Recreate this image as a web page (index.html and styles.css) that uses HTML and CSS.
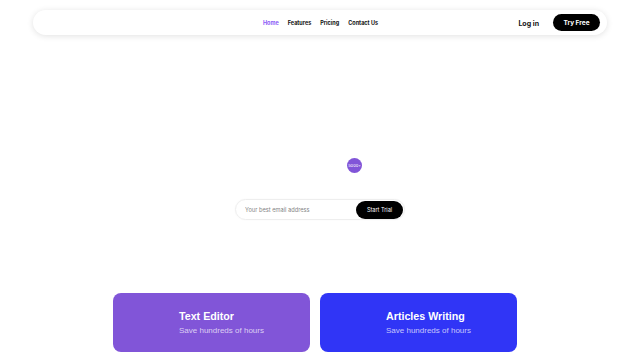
FILE: index.html
```html
<!DOCTYPE html>
<html lang="en">
<head>
<meta charset="utf-8">
<title>Landing</title>
<link rel="stylesheet" href="styles.css">
</head>
<body>
<header class="header">
  <nav class="navbar">
    <div class="nav-left"></div>
    <ul class="nav-links">
      <li><a class="nav-link active" href="#">Home</a></li>
      <li><a class="nav-link" href="#">Features</a></li>
      <li><a class="nav-link" href="#">Pricing</a></li>
      <li><a class="nav-link" href="#">Contact Us</a></li>
    </ul>
    <div class="nav-actions">
      <a class="login" href="#">Log in</a>
      <a class="try-btn" href="#">Try Free</a>
    </div>
  </nav>
</header>
<main class="hero">
  <div class="badge-row"><span class="badge">5000+</span></div>
  <form class="signup">
    <input class="email" type="text" placeholder="Your best email address">
    <button class="start-btn" type="button">Start Trial</button>
  </form>
</main>
<section class="cards">
  <div class="card card-purple">
    <h3 class="card-title">Text Editor</h3>
    <p class="card-sub">Save hundreds of hours</p>
  </div>
  <div class="card card-blue">
    <h3 class="card-title">Articles Writing</h3>
    <p class="card-sub">Save hundreds of hours</p>
  </div>
</section>
</body>
</html>
```
FILE: styles.css
```css
* { box-sizing: border-box; }
html, body { margin: 0; padding: 0; background: #fff; }
body {
  font-family: Inter, "Liberation Sans", sans-serif;
  color: #111;
  width: 640px;
  height: 360px;
  overflow: hidden;
}
.header { padding: 10px 33px 0 33px; }
.navbar {
  height: 25px;
  background: #fff;
  border-radius: 13px;
  box-shadow: 0 1px 6px rgba(0,0,0,0.12);
  display: grid;
  grid-template-columns: 1fr auto 1fr;
  align-items: center;
  padding: 0 7px 0 0;
}
.nav-links {
  list-style: none;
  margin: 0 0 0 8px;
  padding: 0;
  display: flex;
  align-items: center;
  gap: 9px;
  line-height: 8px;
  font-size: 5.5px;
}
.nav-links li { display: block; }
.nav-link {
  display: block;
  font-size: 5.5px;
  line-height: 8px;
  font-weight: 700;
  color: #111;
  text-decoration: none;
}
.nav-link.active { color: #8b5cf6; }
.nav-actions {
  display: flex;
  justify-content: flex-end;
  align-items: center;
  gap: 14px;
}
.login {
  font-size: 7px;
  font-weight: 700;
  color: #111;
  text-decoration: none;
  margin-top: 1px;
}
.try-btn {
  background: #000;
  color: #fff;
  font-size: 6.5px;
  font-weight: 700;
  text-decoration: none;
  width: 47px;
  height: 17px;
  border-radius: 9px;
  display: flex;
  align-items: center;
  justify-content: center;
}
.hero {
  height: 258px;
  display: flex;
  flex-direction: column;
  align-items: center;
  padding-top: 123px;
}
.badge-row {
  width: 170px;
  display: flex;
  justify-content: flex-end;
  padding-right: 43px;
}
.badge {
  width: 15px;
  height: 15px;
  border-radius: 50%;
  background: #8155d8;
  color: #fff;
  font-size: 4px;
  display: flex;
  align-items: center;
  justify-content: center;
}
.signup {
  margin-top: 26px;
  width: 170px;
  height: 21px;
  border: 1px solid #eeeeee;
  border-radius: 11px;
  display: flex;
  align-items: center;
  padding: 0 1px 0 9px;
  box-shadow: 0 0 2px rgba(0,0,0,0.04);
}
.email {
  flex: 1;
  min-width: 0;
  border: none;
  outline: none;
  background: transparent;
  font-family: Inter, "Liberation Sans", sans-serif;
  font-size: 5.7px;
  color: #333;
  padding: 0;
}
.email::placeholder { color: #858585; }
.start-btn {
  width: 47px;
  height: 18px;
  border: none;
  border-radius: 9px;
  background: #000;
  color: #fff;
  font-family: Inter, "Liberation Sans", sans-serif;
  font-size: 5.5px;
  padding: 0;
}
.cards {
  display: flex;
  gap: 10px;
  padding-left: 113px;
}
.card {
  width: 197px;
  height: 59px;
  border-radius: 8px;
  padding: 17px 0 0 66px;
  color: #fff;
  font-family: "Liberation Sans", Arial, sans-serif;
}
.card-purple { background: #8155d8; }
.card-blue { background: #3035f6; }
.card-title {
  margin: 0;
  font-size: 10.7px;
  font-weight: 700;
  line-height: 13px;
}
.card-sub {
  margin: 1.5px 0 0 0;
  font-size: 8px;
  line-height: 11px;
  color: rgba(255,255,255,0.72);
}
```
